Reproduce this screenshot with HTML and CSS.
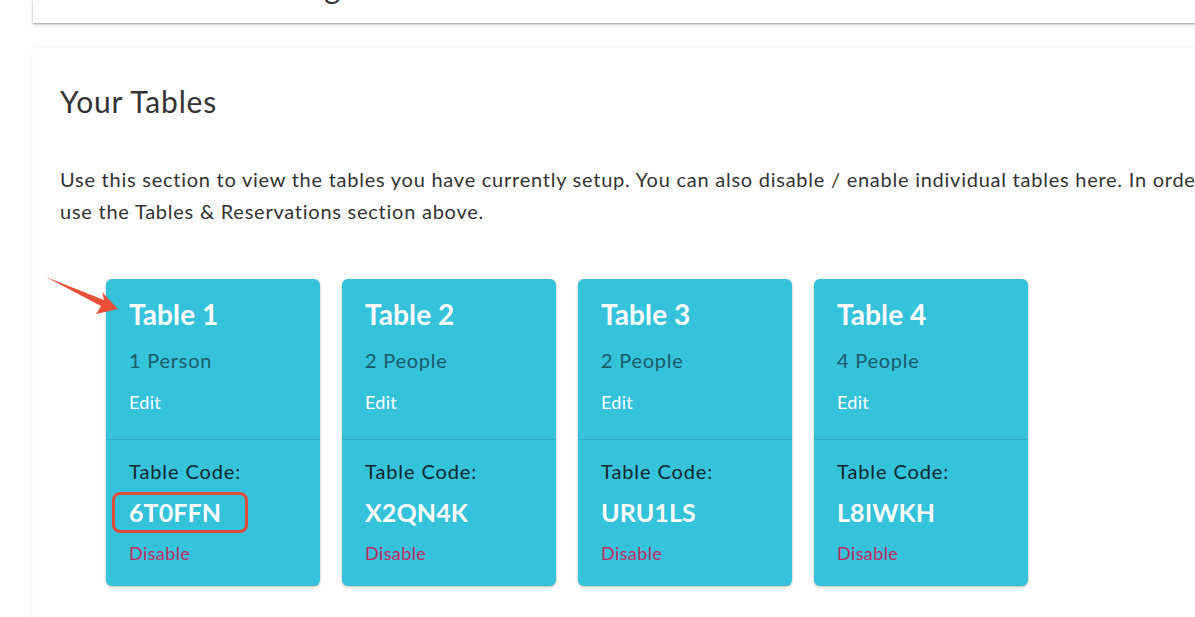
FILE: index.html
```html
<!DOCTYPE html>
<html>
<head>
<meta charset="utf-8">
<title>Your Tables</title>
<link rel="stylesheet" href="styles.css">
</head>
<body>
<div class="page">
  <div class="panel panel-top">
    <h2 class="top-title">Reservation Settings</h2>
  </div>
  <section class="panel panel-tables">
    <h2 class="title">Your Tables</h2>
    <p class="intro">Use this section to view the tables you have currently setup. You can also disable / enable individual tables here. In order to add new tables,<br>use the Tables &amp; Reservations section above.</p>
    <div class="cards">
      <div class="card">
        <div class="card-top">
          <div class="card-name">Table 1</div>
          <div class="card-size">1 Person</div>
          <a class="card-edit">Edit</a>
        </div>
        <div class="card-bottom">
          <div class="code-label">Table Code:</div>
          <div class="code">6T0FFN</div>
          <a class="disable">Disable</a>
        </div>
        <svg class="arrow" width="80" height="46" viewBox="0 0 80 46"><path d="M0 3 L58 26 L56 18 L72 35 L50 40 L55 32 Z" fill="#e8503a"/></svg>
        <div class="highlight"></div>
      </div>
      <div class="card">
        <div class="card-top">
          <div class="card-name">Table 2</div>
          <div class="card-size">2 People</div>
          <a class="card-edit">Edit</a>
        </div>
        <div class="card-bottom">
          <div class="code-label">Table Code:</div>
          <div class="code">X2QN4K</div>
          <a class="disable">Disable</a>
        </div>
      </div>
      <div class="card">
        <div class="card-top">
          <div class="card-name">Table 3</div>
          <div class="card-size">2 People</div>
          <a class="card-edit">Edit</a>
        </div>
        <div class="card-bottom">
          <div class="code-label">Table Code:</div>
          <div class="code">URU1LS</div>
          <a class="disable">Disable</a>
        </div>
      </div>
      <div class="card">
        <div class="card-top">
          <div class="card-name">Table 4</div>
          <div class="card-size">4 People</div>
          <a class="card-edit">Edit</a>
        </div>
        <div class="card-bottom">
          <div class="code-label">Table Code:</div>
          <div class="code">L8IWKH</div>
          <a class="disable">Disable</a>
        </div>
      </div>
    </div>
  </section>
</div>
</body>
</html>
```
FILE: styles.css
```css
html, body {
  margin: 0;
  padding: 0;
  background: #ffffff;
  overflow: hidden;
}
body {
  font-family: Lato, "Open Sans", sans-serif;
  color: #333333;
  width: 1195px;
  height: 617px;
}
.page {
  padding-left: 33px;
  width: 1500px;
}
.panel {
  background: #fff;
}
.panel-top {
  height: 23px;
  overflow: hidden;
  box-shadow: 0 1px 2px rgba(0,0,0,0.35), 0 3px 6px rgba(0,0,0,0.06);
  position: relative;
}
.top-title {
  margin: -33px 0 0 27px;
  font-size: 31px;
  font-weight: 400;
  line-height: 40px;
  letter-spacing: 0.9px;
  color: #333;
}
.panel-tables {
  margin-top: 25px;
  padding: 28px 27px 40px 27px;
  box-shadow: 0 0 3px rgba(0,0,0,0.08);
  height: 600px;
}
.title {
  margin: 0;
  font-size: 30px;
  font-weight: 400;
  line-height: 50px;
  letter-spacing: 0.8px;
  color: #333;
}
.intro {
  margin: 37px 0 0 0;
  font-size: 20px;
  line-height: 32px;
  letter-spacing: 0.75px;
  color: #333;
  width: 1450px;
}
.cards {
  display: flex;
  gap: 22px;
  margin-top: 52px;
  padding-left: 46px;
}
.card {
  position: relative;
  width: 214px;
  height: 307px;
  background: #35c2db;
  border-radius: 6px;
  box-shadow: 0 1px 3px rgba(0,0,0,0.28);
  display: flex;
  flex-direction: column;
}
.card-top {
  padding: 18px 23px 0 23px;
  height: 161px;
  box-sizing: border-box;
  border-bottom: 1px solid #2fadc4;
}
.card-name {
  font-size: 28px;
  font-weight: 700;
  color: #ffffff;
  line-height: 34px;
  letter-spacing: 0.1px;
}
.card-size {
  margin-top: 16px;
  font-size: 20px;
  color: #1c5b67;
  line-height: 26px;
  letter-spacing: 0.75px;
}
.card-edit {
  display: block;
  margin-top: 17px;
  font-size: 18px;
  color: #ffffff;
  line-height: 24px;
  letter-spacing: 0.3px;
}
.card-bottom {
  padding: 18px 23px 0 23px;
}
.code-label {
  font-size: 20px;
  color: #10272c;
  line-height: 26px;
  letter-spacing: 0.9px;
}
.code {
  margin-top: 12px;
  font-size: 25px;
  font-weight: 700;
  color: #ffffff;
  line-height: 32px;
  letter-spacing: 0.1px;
}
.disable {
  display: block;
  margin-top: 13px;
  font-size: 18px;
  color: #c42a5c;
  line-height: 24px;
  letter-spacing: 0.4px;
}
.arrow {
  position: absolute;
  left: -60px;
  top: -5px;
}
.highlight {
  position: absolute;
  left: 6px;
  top: 213px;
  width: 136px;
  height: 41px;
  box-sizing: border-box;
  border: 3px solid #e04c3b;
  border-radius: 8px;
}
```
